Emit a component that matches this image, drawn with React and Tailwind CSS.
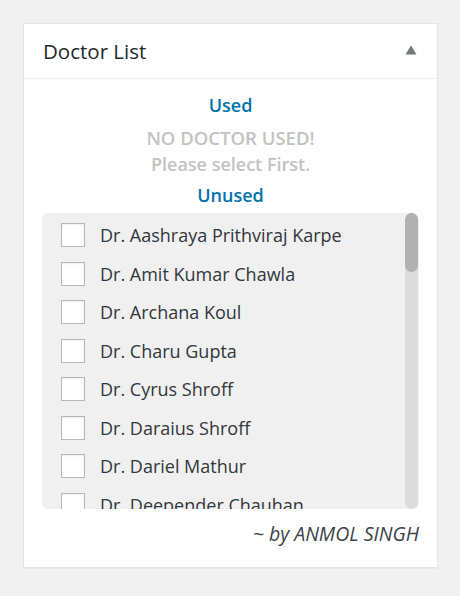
const doctors = [
  'Dr. Aashraya Prithviraj Karpe',
  'Dr. Amit Kumar Chawla',
  'Dr. Archana Koul',
  'Dr. Charu Gupta',
  'Dr. Cyrus Shroff',
  'Dr. Daraius Shroff',
  'Dr. Dariel Mathur',
  'Dr. Deepender Chauhan',
  'Dr. Dinesh Singhal',
];

const App = () => {
  return (
    <div className="min-h-screen bg-[#f1f1f1] p-[23px] font-['Open_Sans',sans-serif]">
      <div className="w-[415px] h-[545px] bg-white border border-[#e5e5e5] shadow-[0_1px_1px_rgba(0,0,0,0.04)]">
        {/* Header */}
        <div className="h-[55px] flex items-center justify-between pl-[19px] pr-[20px] border-b border-[#eeeeee]">
          <h2 className="text-[20.5px] text-[#23282d] leading-[28px]">Doctor List</h2>
          <svg width="12" height="10" viewBox="0 0 12 10" className="mt-[-2px]">
            <path d="M6 0.5 L11.5 9.5 L0.5 9.5 Z" fill="#72777c" />
          </svg>
        </div>

        <div className="px-[18px] pt-[14px]">
          <p className="text-center text-[18px] font-semibold text-[#0073aa] leading-[24px]">Used</p>
          <p className="text-center text-[18.5px] font-semibold text-[#c3c3c3] leading-[24px] mt-[9px]">NO DOCTOR USED!</p>
          <p className="text-center text-[18px] font-semibold text-[#c3c3c3] leading-[24px] mt-[2px]">Please select First.</p>
          <p className="text-center text-[18px] font-semibold text-[#0073aa] leading-[24px] mt-[7px]">Unused</p>

          {/* Doctor list box */}
          <div className="mt-[6px] h-[296px] bg-[#f0f0f0] rounded-[6px] flex overflow-hidden">
            <ul className="flex-1 pt-[3px] overflow-hidden">
              {doctors.map((name) => (
                <li key={name} className="h-[38.5px] flex items-center pl-[19px] gap-[15px]">
                  <span className="w-[24px] h-[24px] shrink-0 bg-white border border-[#b4b9be] shadow-[inset_0_1px_2px_rgba(0,0,0,0.07)]" />
                  <span className="text-[18px] text-[#32373c] leading-[26px] whitespace-nowrap">{name}</span>
                </li>
              ))}
            </ul>
            <div className="w-[13px] mr-[1px] h-full bg-[#dcdcdc] rounded-full flex flex-col">
              <div className="h-[59px] bg-[#b1b1b1] rounded-full" />
            </div>
          </div>

          <p className="text-right italic text-[19.5px] text-[#3c434a] leading-[26px] mt-[12px]">~ by ANMOL SINGH</p>
        </div>
      </div>
    </div>
  );
};

export default App;
